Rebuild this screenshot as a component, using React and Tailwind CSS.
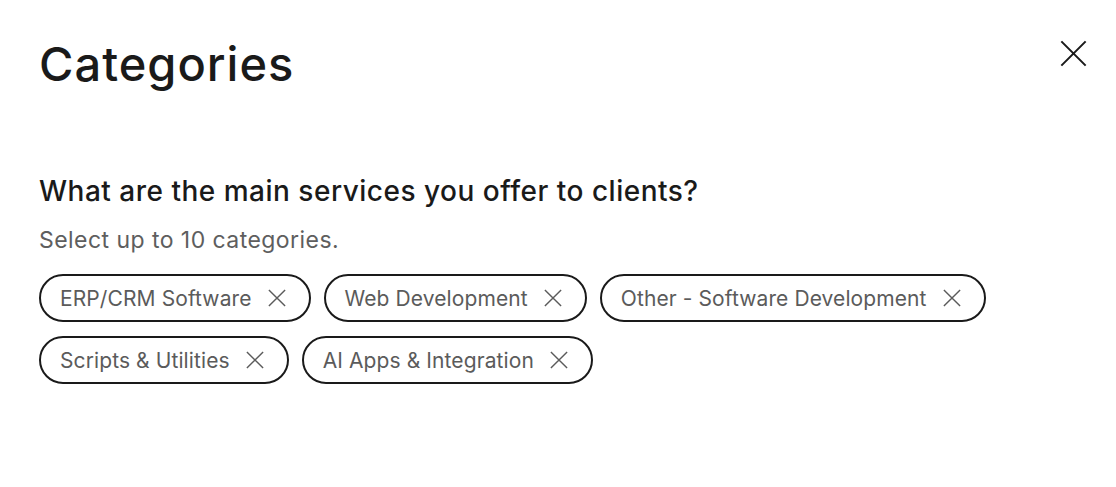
const categories = [
  'ERP/CRM Software',
  'Web Development',
  'Other - Software Development',
  'Scripts & Utilities',
  'AI Apps & Integration',
];

function Cross({ size, stroke = 1.6 }) {
  return (
    <svg width={size} height={size} viewBox="0 0 20 20" fill="none" stroke="currentColor" strokeWidth={stroke}>
      <path d="M1 1 L19 19 M19 1 L1 19" />
    </svg>
  );
}

function Chip({ label }) {
  return (
    <div className="flex items-center h-[48px] pl-[19px] pr-[23px] gap-[16px] rounded-full border-2 border-[#1a1a1a] bg-white">
      <span className="text-[21px] text-[#5b5b5b] leading-none tracking-[0.1px]">{label}</span>
      <span className="text-[#5b5b5b]">
        <Cross size={18} />
      </span>
    </div>
  );
}

export default function App() {
  return (
    <div className="w-[1116px] h-[487px] bg-white font-['Inter',sans-serif] text-[#1a1a1a] px-[39px] pt-[36px]">
      {/* Header */}
      <div className="flex items-start justify-between">
        <h1 className="text-[47px] font-medium leading-none tracking-[1px] pt-[4px]">Categories</h1>
        <button className="mr-[-10px] mt-[4px] text-[#1a1a1a]">
          <Cross size={27} stroke={1.5} />
        </button>
      </div>

      <div className="mt-[90px]">
        <h2 className="text-[28px] font-medium leading-none tracking-[0.5px]">What are the main services you offer to clients?</h2>
        <p className="mt-[24px] text-[23px] text-[#5e5e5e] leading-none tracking-[0.45px]">Select up to 10 categories.</p>
        <div className="mt-[22px] flex flex-wrap gap-x-[13px] gap-y-[14px] w-[960px]">
          {categories.map((c) => (
            <Chip key={c} label={c} />
          ))}
        </div>
      </div>
    </div>
  );
}
